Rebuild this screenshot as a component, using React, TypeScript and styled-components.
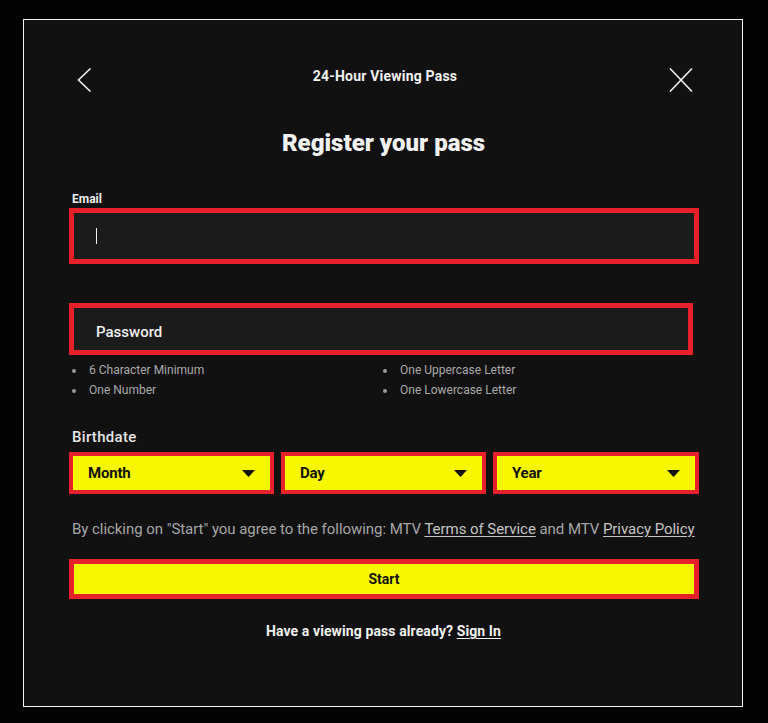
import React from "react";
import styled, { createGlobalStyle } from "styled-components";

const Global = createGlobalStyle`
  html, body { margin: 0; padding: 0; background: #030303; }
  body { font-family: Roboto, "Liberation Sans", Arial, sans-serif; }
  * { box-sizing: border-box; }
`;

const Page = styled.div`
  padding: 19px 0 0 23px;
  width: 768px;
  height: 723px;
  background: #030303;
`;

const Panel = styled.div`
  width: 720px;
  height: 688px;
  border: 1px solid #f4f4f4;
  background: #111111;
  padding: 48px 44px 0 45px;
  display: flex;
  flex-direction: column;
`;

const Header = styled.div`
  display: flex;
  align-items: flex-start;
  justify-content: space-between;
  height: 24px;
  padding: 0 5px 0 8px;
`;

const IconButton = styled.button`
  background: none;
  border: 0;
  padding: 0;
  width: 24px;
  height: 24px;
  display: flex;
  cursor: pointer;
`;

const HeaderTitle = styled.div`
  color: #f2f2f2;
  font-size: 14px;
  font-weight: 700;
  line-height: 16px;
  letter-spacing: 0.2px;
`;

const Heading = styled.h1`
  margin: 38px 0 0;
  text-align: center;
  color: #f2f2f2;
  font-size: 24px;
  font-weight: 900;
  line-height: 26px;
  letter-spacing: 0px;
`;

const SmallLabel = styled.div`
  margin-top: 36px;
  color: #eeeeee;
  font-size: 12px;
  font-weight: 700;
  line-height: 14px;
  padding-left: 3px;
  letter-spacing: 0px;
`;

const Field = styled.div<{ $width: number; $height: number; $mt: number }>`
  margin-top: ${(p) => p.$mt}px;
  width: ${(p) => p.$width}px;
  height: ${(p) => p.$height}px;
  border: 5px solid #e6212b;
  background: #1b1b1b;
  display: flex;
  align-items: center;
  padding: 0 0 0 22px;
`;

const Caret = styled.span`
  width: 1px;
  height: 16px;
  background: #f0f0f0;
`;

const Placeholder = styled.span`
  color: #efefef;
  font-size: 15px;
  font-weight: 500;
  letter-spacing: 0px;
  margin-top: 5px;
`;

const Rules = styled.ul`
  list-style: none;
  margin: 5px 0 0;
  padding: 0;
  display: grid;
  grid-template-columns: 311px 1fr;
`;

const Rule = styled.li`
  position: relative;
  padding-left: 20px;
  color: #a9a9a9;
  font-size: 12px;
  line-height: 20px;
  letter-spacing: 0px;
  &::before {
    content: "";
    position: absolute;
    left: 3px;
    top: 9px;
    width: 4px;
    height: 4px;
    border-radius: 50%;
    background: #9a9a9a;
  }
`;

const SectionLabel = styled.div`
  margin-top: 28px;
  padding-left: 3px;
  color: #e6e6e6;
  font-size: 15px;
  font-weight: 500;
  line-height: 18px;
  letter-spacing: 0.3px;
`;

const Selects = styled.div`
  margin-top: 6px;
  display: grid;
  grid-template-columns: 205px 205px 206px;
  gap: 7px;
`;

const Select = styled.button`
  height: 42px;
  border: 4px solid #e6212b;
  background: #f7f700;
  display: flex;
  align-items: center;
  justify-content: space-between;
  padding: 0 15px 0 15px;
  font-family: inherit;
  color: #111;
  font-size: 15px;
  font-weight: 700;
  letter-spacing: -0.2px;
  cursor: pointer;
`;

const Legal = styled.p`
  margin: 25px 0 0;
  padding-left: 3px;
  color: #a6a6a6;
  font-size: 15px;
  line-height: 20px;
  letter-spacing: -0.05px;
  white-space: nowrap;
`;

const LegalLink = styled.a`
  color: #c4c4c4;
  text-decoration: underline;
  text-underline-offset: 2px;
`;

const StartButton = styled.button`
  margin-top: 20px;
  width: 630px;
  height: 40px;
  border: 5px solid #e6212b;
  background: #f7f700;
  font-family: inherit;
  color: #111;
  font-size: 14px;
  font-weight: 700;
  letter-spacing: 0px;
  cursor: pointer;
`;

const SignInLine = styled.p`
  margin: 23px 0 0;
  text-align: center;
  color: #f2f2f2;
  font-size: 14px;
  font-weight: 700;
  line-height: 18px;
  letter-spacing: 0.1px;
`;

const SignInLink = styled.a`
  color: #f2f2f2;
  text-decoration: underline;
  text-underline-offset: 2px;
`;

const Chevron = () => (
  <svg width="24" height="24" viewBox="0 0 24 24" fill="none">
    <path d="M13.5 0.5 L1.5 12 L13.5 23.5" stroke="#eeeeee" strokeWidth="1.6" />
  </svg>
);

const Close = () => (
  <svg width="24" height="24" viewBox="0 0 24 24" fill="none">
    <path d="M1 0.5 L23 23.5 M23 0.5 L1 23.5" stroke="#eeeeee" strokeWidth="1.6" />
  </svg>
);

const Caretdown = () => (
  <svg width="13" height="7" viewBox="0 0 13 7">
    <path d="M0 0 H13 L6.5 7 Z" fill="#111" />
  </svg>
);

export default function App() {
  return (
    <Page>
      <Global />
      <Panel>
        <Header>
          <IconButton aria-label="Back">
            <Chevron />
          </IconButton>
          <HeaderTitle>24-Hour Viewing Pass</HeaderTitle>
          <IconButton aria-label="Close">
            <Close />
          </IconButton>
        </Header>
        <Heading>Register your pass</Heading>
        <SmallLabel>Email</SmallLabel>
        <Field $width={630} $height={56} $mt={2}>
          <Caret />
        </Field>
        <Field $width={624} $height={52} $mt={39}>
          <Placeholder>Password</Placeholder>
        </Field>
        <Rules>
          <Rule>6 Character Minimum</Rule>
          <Rule>One Uppercase Letter</Rule>
          <Rule>One Number</Rule>
          <Rule>One Lowercase Letter</Rule>
        </Rules>
        <SectionLabel>Birthdate</SectionLabel>
        <Selects>
          {["Month", "Day", "Year"].map((l) => (
            <Select key={l}>
              <span>{l}</span>
              <Caretdown />
            </Select>
          ))}
        </Selects>
        <Legal>
          By clicking on "Start" you agree to the following: MTV{" "}
          <LegalLink>Terms of Service</LegalLink> and MTV{" "}
          <LegalLink>Privacy Policy</LegalLink>
        </Legal>
        <StartButton>Start</StartButton>
        <SignInLine>
          Have a viewing pass already? <SignInLink>Sign In</SignInLink>
        </SignInLine>
      </Panel>
    </Page>
  );
}
